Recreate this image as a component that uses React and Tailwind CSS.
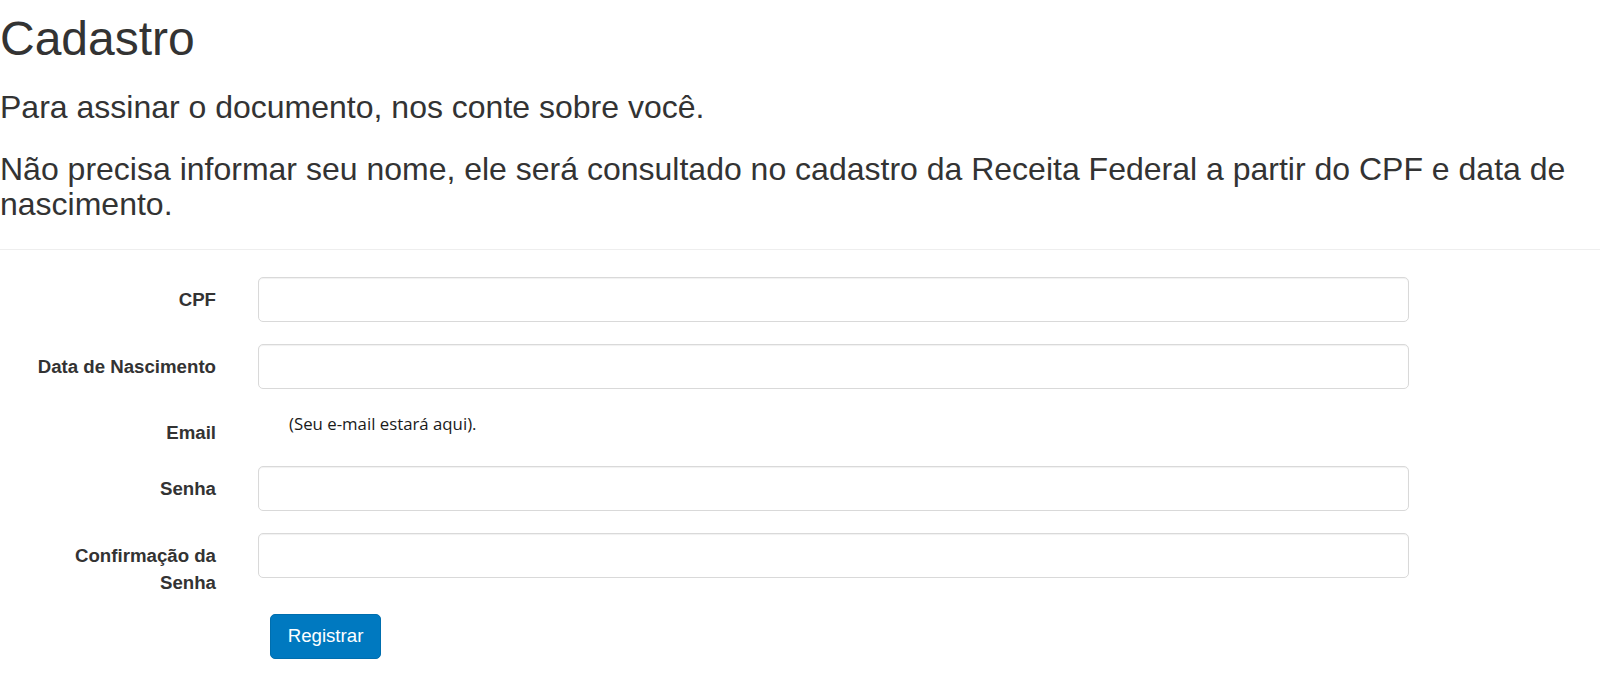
export default function App() {
  const labelCls =
    "w-[216px] shrink-0 text-right font-bold text-[18.67px] leading-[26.67px] text-[#333] pt-[10px]";
  const inputCls =
    "ml-[42px] w-[1151px] h-[45px] rounded-[5px] border border-[#d9d9d9] bg-white shadow-[inset_0_1px_1px_rgba(0,0,0,0.06)]";
  return (
    <div className="w-[1600px] bg-white text-[#333]" style={{ fontFamily: '"Liberation Sans", Arial, sans-serif' }}>
      <h1 className="pt-[13px] text-[48px] leading-[52.8px] font-normal">Cadastro</h1>
      <h3 className="mt-[24px] text-[32px] leading-[35.2px] font-normal">
        Para assinar o documento, nos conte sobre você.
      </h3>
      <h3 className="mt-[27px] text-[32px] leading-[35.2px] font-normal">
        Não precisa informar seu nome, ele será consultado no cadastro da Receita Federal a partir do CPF e data de
        nascimento.
      </h3>
      <hr className="mt-[27px] border-0 border-t border-[#eeeeee]" />
      <div className="flex flex-col pt-[27px]">
        <div className="flex">
          <label className={labelCls}>CPF</label>
          <div className={inputCls} />
        </div>
        <div className="flex mt-[22px]">
          <label className={labelCls}>Data de Nascimento</label>
          <div className={inputCls} />
        </div>
        <div className="flex mt-[21px] h-[35px]">
          <label className={labelCls}>Email</label>
          <div
            className="ml-[73px] pt-[3px] text-[16.8px] leading-[22px] text-[#1a1a1a]"
            style={{ fontFamily: '"Open Sans", "Noto Sans", sans-serif' }}
          >
            (Seu e-mail estará aqui).
          </div>
        </div>
        <div className="flex mt-[21px]">
          <label className={labelCls}>Senha</label>
          <div className={inputCls} />
        </div>
        <div className="flex mt-[22px]">
          <label className={labelCls}>
            Confirmação da
            <br />
            Senha
          </label>
          <div className={inputCls} />
        </div>
        <div className="flex mt-[17px]">
          <div className="w-[270px] shrink-0" />
          <button className="w-[111px] h-[45px] rounded-[5px] bg-[#0079c0] border border-[#006eae] text-white text-[18.67px] leading-none">
            Registrar
          </button>
        </div>
      </div>
    </div>
  );
}
